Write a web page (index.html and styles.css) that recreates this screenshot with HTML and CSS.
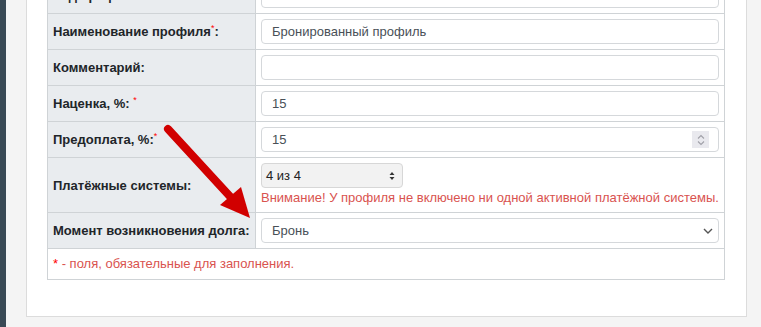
FILE: index.html
```html
<!DOCTYPE html>
<html>
<head>
    <meta charset="utf-8">
    <link rel="stylesheet" href="styles.css">
</head>
<body>
    <div class="sidebar"></div>
    <div class="content">
        <div class="card">
            <table class="form-table">
                <colgroup>
                    <col class="col-label">
                    <col>
                </colgroup>
                <tr>
                    <td class="label">Код профиля:</td>
                    <td class="field"><input type="text" class="input" value=""></td>
                </tr>
                <tr>
                    <td class="label">Наименование профиля<sup class="req">*</sup>:</td>
                    <td class="field"><input type="text" class="input" value="Бронированный профиль"></td>
                </tr>
                <tr>
                    <td class="label">Комментарий:</td>
                    <td class="field"><input type="text" class="input" value=""></td>
                </tr>
                <tr>
                    <td class="label">Наценка, %: <sup class="req">*</sup></td>
                    <td class="field"><input type="text" class="input" value="15"></td>
                </tr>
                <tr>
                    <td class="label">Предоплата, %:<sup class="req">*</sup></td>
                    <td class="field">
                        <div class="number-box">
                            <input type="text" class="number-input" value="15">
                            <span class="spin">
                                <svg width="10" height="14" viewBox="0 0 10 14">
                                    <path d="M2 5.5 L5 2.5 L8 5.5 M2 8.5 L5 11.5 L8 8.5" fill="none" stroke="#a0a0a8" stroke-width="1.1"/>
                                </svg>
                            </span>
                        </div>
                    </td>
                </tr>
                <tr>
                    <td class="label">Платёжные системы:</td>
                    <td class="field">
                        <div class="multi-select">
                            <span>4 из 4</span>
                            <svg width="8" height="12" viewBox="0 0 8 12">
                                <path d="M1.5 5 L4 2 L6.5 5 Z M1.5 7 L4 10 L6.5 7 Z" fill="#333"/>
                            </svg>
                        </div>
                        <div class="warning">Внимание! У профиля не включено ни одной активной платёжной системы.</div>
                    </td>
                </tr>
                <tr>
                    <td class="label">Момент возникновения долга:</td>
                    <td class="field">
                        <div class="select-box">
                            <span>Бронь</span>
                            <svg width="10" height="6" viewBox="0 0 10 6">
                                <path d="M1 1 L5 5 L9 1" fill="none" stroke="#555" stroke-width="1.4"/>
                            </svg>
                        </div>
                    </td>
                </tr>
                <tr>
                    <td class="note" colspan="2"><span class="req-star">*</span> - поля, обязательные для заполнения.</td>
                </tr>
            </table>
        </div>
    </div>

    <!-- pointer arrow drawn over the form -->
    <svg class="pointer" width="761" height="327" viewBox="0 0 761 327">
        <line x1="168" y1="129" x2="236" y2="203" stroke="#d10000" stroke-width="8" stroke-linecap="round"/>
        <polygon points="250,218 220,205 241,187" fill="#d10000"/>
    </svg>
</body>
</html>
```

FILE: styles.css
```css
body {
    margin: 0;
    height: 327px;
    overflow: hidden;
    display: flex;
    background: #f4f4f4;
    font-family: "Liberation Sans", Arial, sans-serif;
    font-size: 13px;
    color: #212529;
}

.sidebar {
    width: 6px;
    flex: 0 0 6px;
    background: #394955;
}

.content {
    flex: 1;
    padding: 0 14px 0 20px;
}

/* card top is scrolled out of view */
.card {
    margin-top: -44px;
    background: white;
    border: 1px solid #dcdcdc;
    padding: 20px 21px 36px 20px;
}

.form-table {
    width: 678px;
    table-layout: fixed;
    border-collapse: collapse;
}

.col-label {
    width: 208px;
}

.form-table td {
    border: 1px solid #cfd3d6;
    padding: 5px;
    vertical-align: middle;
}

.label {
    background: #e9ecef;
    font-weight: bold;
    white-space: nowrap;
}

.req {
    color: #ff0000;
    font-size: 9px;
    font-weight: normal;
    vertical-align: 5px;
    line-height: 0;
}

.input {
    display: block;
    box-sizing: border-box;
    width: 100%;
    height: 25px;
    padding: 0 10px;
    border: 1px solid #d5d8db;
    border-radius: 4px;
    font-family: inherit;
    font-size: 13px;
    color: #495057;
    background: white;
}

.number-box {
    display: flex;
    align-items: center;
    box-sizing: border-box;
    height: 25px;
    padding: 0 9px 0 10px;
    border: 1px solid #d5d8db;
    border-radius: 4px;
}

.number-input {
    flex: 1;
    border: 0;
    padding: 0;
    font-family: inherit;
    font-size: 13px;
    color: #495057;
    outline: none;
}

.spin {
    width: 17px;
    height: 17px;
    display: flex;
    align-items: center;
    justify-content: center;
    background: #e9e9ee;
}

.multi-select {
    display: flex;
    align-items: center;
    justify-content: space-between;
    box-sizing: border-box;
    width: 142px;
    height: 25px;
    padding: 0 6px 0 4px;
    border: 1px solid #d7d7d7;
    border-radius: 4px;
    background: #f2f2f2;
    color: #222;
}

.warning {
    margin-top: 1px;
    line-height: 18px;
    color: #d9534f;
    white-space: nowrap;
}

.select-box {
    display: flex;
    align-items: center;
    justify-content: space-between;
    box-sizing: border-box;
    height: 25px;
    padding: 0 5px 0 10px;
    border: 1px solid #d5d8db;
    border-radius: 4px;
    color: #495057;
}

.note {
    padding: 6px 5px;
    line-height: 20px;
    color: #d9534f;
}

.req-star {
    color: #ff0000;
}

.pointer {
    position: absolute;
    left: 0;
    top: 0;
    pointer-events: none;
}
```
